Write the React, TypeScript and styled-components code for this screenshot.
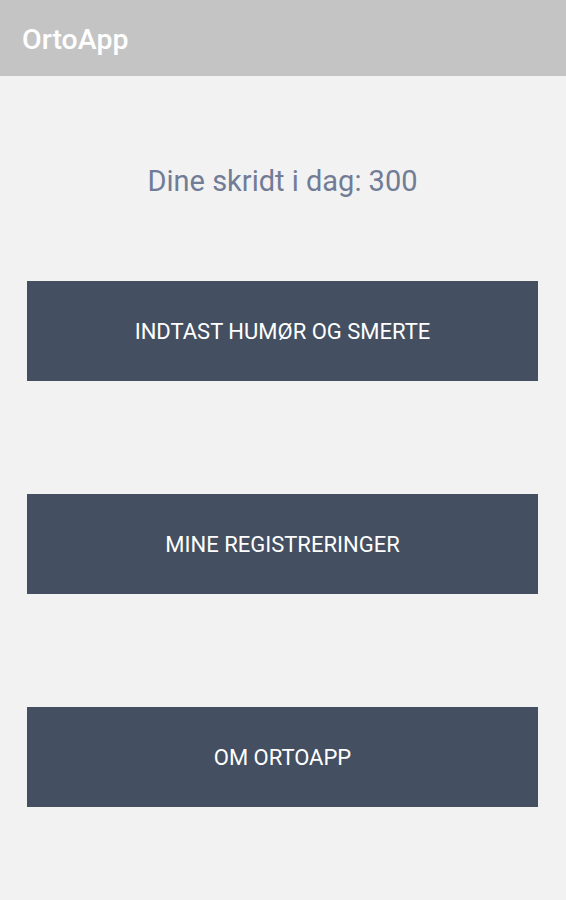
import styled, { createGlobalStyle } from "styled-components";

const GlobalStyle = createGlobalStyle`
  html, body {
    margin: 0;
    padding: 0;
    background: #f2f2f2;
    font-family: Roboto, "Liberation Sans", sans-serif;
  }
`;

const Screen = styled.div`
  width: 566px;
  min-height: 900px;
  background: #f2f2f2;
  display: flex;
  flex-direction: column;
`;

const AppBar = styled.header`
  height: 76px;
  background: #c4c4c4;
  display: flex;
  align-items: center;
  padding: 2px 22px 0;
  box-sizing: border-box;
`;

const AppTitle = styled.h1`
  margin: 0;
  font-size: 28.5px;
  font-weight: 500;
  color: #ffffff;
`;

const Content = styled.main`
  display: flex;
  flex-direction: column;
  padding: 0 28px 0 27px;
`;

const Steps = styled.p`
  margin: 88px 0 0;
  height: 34px;
  line-height: 34px;
  text-align: center;
  font-size: 29px;
  color: #717c96;
`;

const MenuList = styled.nav`
  display: flex;
  flex-direction: column;
  gap: 113px;
  margin-top: 83px;
`;

const MenuButton = styled.button`
  height: 100px;
  border: none;
  border-radius: 0;
  background: #444f61;
  color: #ffffff;
  font-family: Roboto, "Liberation Sans", sans-serif;
  font-size: 22px;
  text-transform: uppercase;
  cursor: pointer;
`;

const items = ["Indtast humør og smerte", "Mine registreringer", "Om OrtoApp"];

export default function App() {
  return (
    <>
      <GlobalStyle />
      <Screen>
        <AppBar>
          <AppTitle>OrtoApp</AppTitle>
        </AppBar>
        <Content>
          <Steps>Dine skridt i dag: 300</Steps>
          <MenuList>
            {items.map((label) => (
              <MenuButton key={label} type="button">
                {label}
              </MenuButton>
            ))}
          </MenuList>
        </Content>
      </Screen>
    </>
  );
}
